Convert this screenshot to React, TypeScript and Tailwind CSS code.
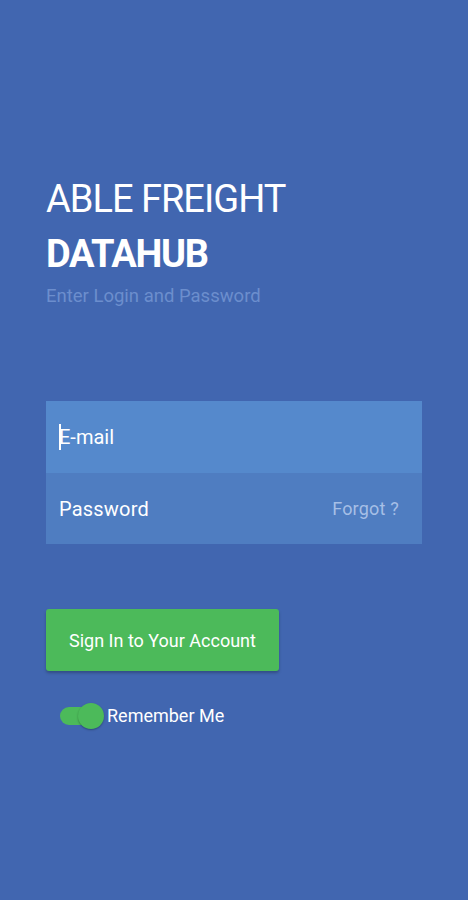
export default function App() {
  return (
    <div
      className="w-[468px] h-[900px] bg-[#4166b0] flex flex-col px-[46px] pt-[176px]"
      style={{ fontFamily: 'Roboto, "Liberation Sans", sans-serif' }}
    >
      <h1 className="text-[38px] leading-[46px] text-white font-normal tracking-[-1px]">ABLE FREIGHT</h1>
      <h2 className="text-[38px] leading-[46px] text-white font-bold mt-[9px] tracking-[-1.3px]">DATAHUB</h2>
      <p className="text-[18.5px] leading-[22px] text-[#6c8ecd] mt-[8px]">Enter Login and Password</p>

      <div className="mt-[94px] w-[376px] flex flex-col">
        <div className="h-[72px] bg-[#5589cc] flex items-center pl-[13px]">
          <span className="w-[2px] h-[26px] bg-white -mr-[2px]" />
          <span className="text-[20px] text-white">E-mail</span>
        </div>
        <div className="h-[71px] bg-[#4f7dc1] flex items-center justify-between pl-[13px] pr-[23px]">
          <span className="text-[20px] text-white tracking-[0.2px]">Password</span>
          <span className="text-[18px] text-[#a6bfe6] tracking-[0.2px]">Forgot ?</span>
        </div>
      </div>

      <button className="mt-[65px] w-[233px] h-[62px] bg-[#4cba5a] rounded-[3px] shadow-[0_2px_3px_rgba(0,0,0,0.25)] text-white text-[18px] flex items-center justify-center">
        Sign In to Your Account
      </button>

      <div className="mt-[31px] flex items-center pl-[14px]">
        <div className="relative w-[44px] h-[26px] flex items-center">
          <div className="w-[40px] h-[18px] rounded-full bg-[#4cba5a]" />
          <div className="absolute right-0 top-0 w-[26px] h-[26px] rounded-full bg-[#4cba5a] shadow-[0_1px_2px_rgba(0,0,0,0.3)]" />
        </div>
        <span className="ml-[3px] text-[18px] text-white">Remember Me</span>
      </div>
    </div>
  );
}
